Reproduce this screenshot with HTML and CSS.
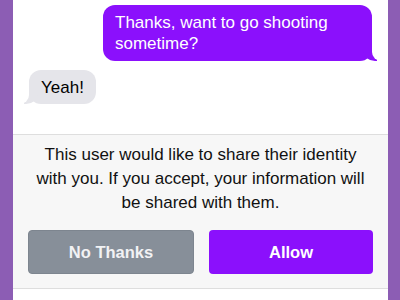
FILE: index.html
```html
<!DOCTYPE html>
<html lang="en">
<head>
  <meta charset="UTF-8" />
  <title>Share Identity</title>
  <link rel="stylesheet" href="styles.css">
</head>
<body>
  <div class="frame"></div>

  <div class="screen">
    <div class="messages">
      <div class="bubble sent"><span>Thanks, want to go shooting sometime?</span></div>
      <div class="bubble received"><span>Yeah!</span></div>
    </div>

    <div class="share-panel">
      <p class="share-text">This user would like to share their identity with you. If you accept, your information will be shared with them.</p>
      <div class="actions">
        <button class="btn decline">No Thanks</button>
        <button class="btn allow">Allow</button>
      </div>
    </div>
  </div>

  <div class="frame right"></div>
</body>
</html>
```

FILE: styles.css
```css
* { box-sizing: border-box; }

body {
  margin: 0;
  width: 400px;
  height: 300px;
  overflow: hidden;
  display: flex;
  font-family: 'Liberation Sans', Arial, sans-serif;
  background: #ffffff;
}

.frame {
  width: 13px;
  background: #8c5db4;
}

.frame.right {
  width: 12px;
}

.screen {
  width: 375px;
  display: flex;
  flex-direction: column;
  background: #ffffff;
}

.messages {
  height: 134px;
  padding: 5px 16px 0;
  display: flex;
  flex-direction: column;
  gap: 9px;
}

.bubble {
  position: relative;
  font-size: 17px;
  line-height: 21px;
  border-radius: 12px;
}

.bubble span {
  position: relative;
  z-index: 2;
}

.sent {
  align-self: flex-end;
  width: 269px;
  padding: 7px 12px;
  background: #8b10fc;
  color: #ffffff;
}

.sent::before {
  content: "";
  position: absolute;
  bottom: 0;
  right: -5px;
  width: 14px;
  height: 14px;
  background: #8b10fc;
  border-bottom-left-radius: 12px 10px;
}

.sent::after {
  content: "";
  position: absolute;
  bottom: 0;
  right: -10px;
  width: 10px;
  height: 16px;
  background: #ffffff;
  border-bottom-left-radius: 9px;
}

.received {
  align-self: flex-start;
  padding: 7px 12px 6px;
  background: #e5e5ea;
  color: #000000;
}

.received::before {
  content: "";
  position: absolute;
  bottom: 0;
  left: -5px;
  width: 14px;
  height: 14px;
  background: #e5e5ea;
  border-bottom-right-radius: 12px 10px;
}

.received::after {
  content: "";
  position: absolute;
  bottom: 0;
  left: -10px;
  width: 10px;
  height: 16px;
  background: #ffffff;
  border-bottom-right-radius: 9px;
}

.share-panel {
  background: #f7f7f7;
  border-top: 1px solid #dedede;
  border-bottom: 1px solid #dedede;
  padding: 8px 15px 14px;
}

.share-text {
  margin: 0;
  text-align: center;
  font-size: 17px;
  line-height: 24px;
  color: #111111;
}

.actions {
  display: flex;
  gap: 15px;
  margin-top: 15px;
}

.btn {
  flex: 1;
  height: 44px;
  border-radius: 4px;
  font-family: inherit;
  font-size: 16.5px;
  font-weight: 600;
  cursor: pointer;
}

.decline {
  background: #878f99;
  border: 1px solid #7d858f;
  color: #f2f2f4;
}

.allow {
  background: #8b10fc;
  border: none;
  color: #ffffff;
}
```
